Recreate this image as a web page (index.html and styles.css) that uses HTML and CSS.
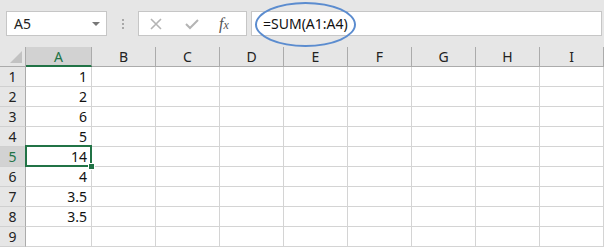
FILE: index.html
```html
<!DOCTYPE html>
<html lang="en">
<head>
    <meta charset="UTF-8">
    <title>Sheet</title>
    <link rel="stylesheet" href="styles.css">
</head>
<body>
    <div class="toolbar">
        <div class="name-box">
            <span>A5</span>
            <span class="drop"></span>
        </div>
        <div class="dots"><i></i><i></i><i></i></div>
        <div class="fx-box">
            <svg width="14" height="14" viewBox="0 0 14 14"><path d="M2 2 L12 12 M12 2 L2 12" stroke="#b4b4b4" stroke-width="1.6" fill="none"/></svg>
            <svg width="16" height="14" viewBox="0 0 16 14"><path d="M2 7 L6 11 L14 3" stroke="#b4b4b4" stroke-width="2" fill="none"/></svg>
            <span class="fx">f<sub>x</sub></span>
        </div>
        <div class="formula">
            <span class="formula-text">=SUM(A1:A4)</span>
            <span class="ring"></span>
        </div>
    </div>

    <div class="sheet">
        <div class="hd corner"><span class="tri"></span></div>
        <div class="hd col active">A</div>
        <div class="hd col">B</div>
        <div class="hd col">C</div>
        <div class="hd col">D</div>
        <div class="hd col">E</div>
        <div class="hd col">F</div>
        <div class="hd col">G</div>
        <div class="hd col">H</div>
        <div class="hd col">I</div>
    </div>
    <div class="sheet body" id="rows"></div>

    <script>
        const values = ['1', '2', '6', '5', '14', '4', '3.5', '3.5', ''];
        const rows = document.getElementById('rows');
        values.forEach((v, i) => {
            const num = i + 1;
            let html = `<div class="hd row${num === 5 ? ' active' : ''}">${num}</div>`;
            html += `<div class="cell num${num === 5 ? ' current' : ''}">${v}`;
            if (num === 5) html += '<span class="sel"><span class="handle"></span></span>';
            html += '</div>';
            for (let c = 0; c < 8; c++) html += '<div class="cell"></div>';
            rows.innerHTML += html;
        });
    </script>
</body>
</html>
```

FILE: styles.css
```css
* {
    box-sizing: border-box;
}
body {
    margin: 0;
    width: 604px;
    height: 247px;
    overflow: hidden;
    background: #e6e6e6;
    font-family: "Noto Sans", "Open Sans", sans-serif;
    color: #222;
}
.toolbar {
    height: 47px;
    display: flex;
    align-items: flex-start;
    padding: 11px 2px 0 6px;
}
.name-box {
    width: 101px;
    height: 25px;
    background: #fff;
    border: 1px solid #c6c6c6;
    display: flex;
    align-items: center;
    justify-content: space-between;
    padding: 0 6px 0 7px;
    font-size: 14px;
}
.drop {
    width: 0;
    height: 0;
    border-left: 4px solid transparent;
    border-right: 4px solid transparent;
    border-top: 4px solid #777;
}
.dots {
    width: 31px;
    height: 25px;
    display: flex;
    flex-direction: column;
    align-items: center;
    justify-content: center;
    gap: 2px;
}
.dots i {
    width: 2px;
    height: 2px;
    background: #a8a8a8;
}
.fx-box {
    width: 109px;
    height: 25px;
    background: #fff;
    border: 1px solid #c6c6c6;
    display: flex;
    align-items: center;
    padding: 0 0 0 10px;
}
.fx-box svg:first-child {
    margin-right: 21px;
}
.fx-box svg:nth-child(2) {
    margin-right: 19px;
}
.fx {
    font-family: "Liberation Serif", "DejaVu Serif", serif;
    font-style: italic;
    font-size: 16px;
    color: #555;
    line-height: 1;
}
.fx sub {
    font-size: 12px;
    vertical-align: 0;
}
.formula {
    position: relative;
    margin-left: 4px;
    width: 351px;
    height: 25px;
    background: #fff;
    border: 1px solid #c6c6c6;
    display: flex;
    align-items: center;
    padding-left: 11px;
    font-size: 14px;
    color: #111;
}
.ring {
    position: absolute;
    left: 3px;
    top: -10px;
    width: 101px;
    height: 45px;
    border: 2px solid #5b8ccf;
    border-radius: 50%;
}
.sheet {
    display: grid;
    grid-template-columns: 26px 66px repeat(8, 64px);
    grid-auto-rows: 20px;
}
.hd {
    background: #e6e6e6;
    border-right: 1px solid #ababab;
    border-bottom: 1px solid #ababab;
    font-size: 14px;
    display: flex;
    align-items: center;
    justify-content: center;
    color: #222;
}
.corner {
    position: relative;
}
.tri {
    position: absolute;
    right: 3px;
    bottom: 3px;
    width: 0;
    height: 0;
    border-left: 12px solid transparent;
    border-bottom: 12px solid #c2c2c2;
}
.hd.col.active {
    background: #d2d2d2;
    border-bottom: 2px solid #217346;
    color: #217346;
}
.hd.row {
    border-bottom: 1px solid #d0d0d0;
}
.hd.row.active {
    background: #d2d2d2;
    color: #217346;
}
.cell {
    position: relative;
    background: #fff;
    border-right: 1px solid #d4d4d4;
    border-bottom: 1px solid #d4d4d4;
    font-size: 14px;
    color: #111;
}
.cell.num {
    text-align: right;
    padding-right: 4px;
    line-height: 20px;
}
.cell.current {
    z-index: 2;
}
.sel {
    position: absolute;
    left: -1px;
    top: -2px;
    right: -1px;
    bottom: -1px;
    border: 2px solid #217346;
}
.handle {
    position: absolute;
    right: -5px;
    bottom: -5px;
    width: 7px;
    height: 7px;
    background: #217346;
    border: 1px solid #fff;
}
```
